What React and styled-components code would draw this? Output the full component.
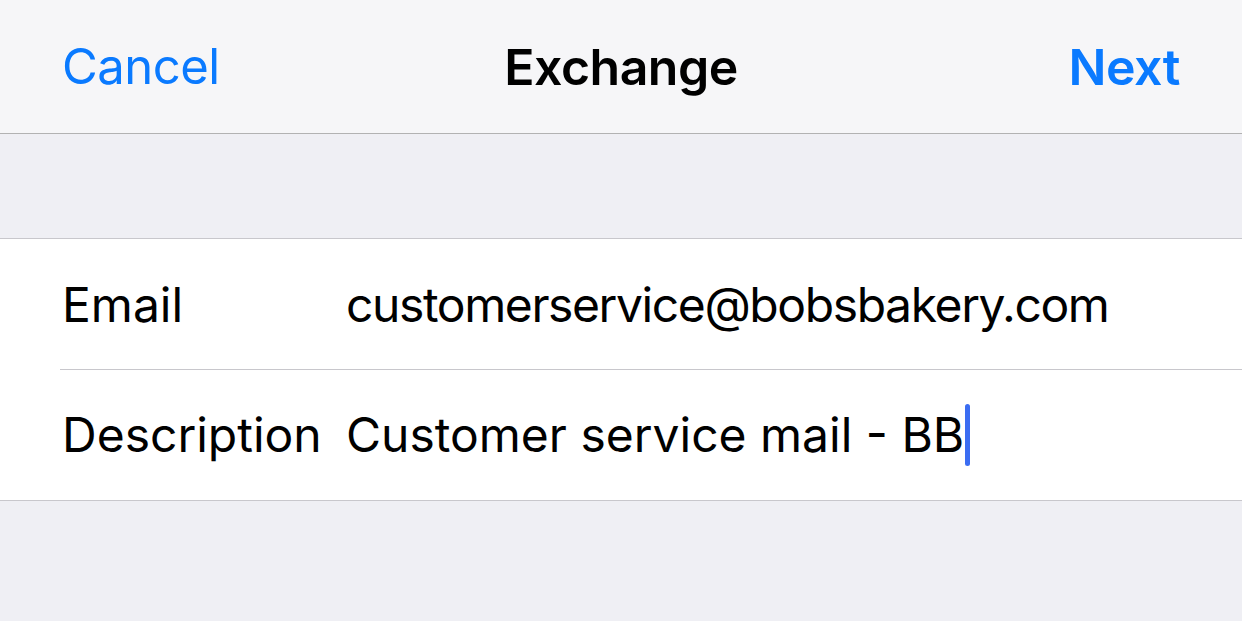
import React from "react";
import styled, { createGlobalStyle } from "styled-components";

const Global = createGlobalStyle`
  html, body {
    margin: 0;
    padding: 0;
    background: #efeff4;
    font-family: Inter, "Noto Sans", sans-serif;
    -webkit-font-smoothing: antialiased;
  }
`;

const Screen = styled.div`
  width: 1242px;
  height: 621px;
  background: #efeff4;
  overflow: hidden;
`;

const NavBar = styled.div`
  height: 133px;
  background: #f6f6f8;
  border-bottom: 1px solid #b2b2b2;
  display: grid;
  grid-template-columns: 1fr auto 1fr;
  align-items: center;
  padding: 0 62px;
  box-sizing: content-box;
`;

const NavButton = styled.button`
  background: none;
  border: 0;
  padding: 0;
  color: #0a7aff;
  font-family: inherit;
  font-size: ${(p) => (p.$bold ? "50px" : "49px")};
  font-weight: ${(p) => (p.$bold ? 600 : 400)};
  letter-spacing: -0.5px;
  justify-self: ${(p) => (p.$end ? "end" : "start")};
`;

const Title = styled.div`
  font-size: 50px;
  font-weight: 600;
  color: #000;
  letter-spacing: -0.5px;
`;

const Spacer = styled.div`
  height: 104px;
`;

const Group = styled.div`
  background: #fff;
  border-top: 1px solid #c8c7cc;
  border-bottom: 1px solid #c8c7cc;
`;

const Row = styled.div`
  height: 130px;
  display: flex;
  align-items: center;
  padding-left: 62px;
  position: relative;
  & + & {
    height: 131px;
  }
  & + &::before {
    content: "";
    position: absolute;
    top: 0;
    left: 60px;
    right: 0;
    height: 1px;
    background: #c8c7cc;
  }
`;

const Label = styled.div`
  width: 284px;
  font-size: 48px;
  color: #000;
`;

const Value = styled.div`
  font-size: 48px;
  color: #000;
  letter-spacing: ${(p) => p.$tracking || "0px"};
  display: flex;
  align-items: center;
`;

const Caret = styled.span`
  display: inline-block;
  width: 5px;
  height: 62px;
  border-radius: 3px;
  background: #3b6df2;
  margin-left: 1px;
`;

export default function App() {
  return (
    <Screen>
      <Global />
      <NavBar>
        <NavButton>Cancel</NavButton>
        <Title>Exchange</Title>
        <NavButton $bold $end>
          Next
        </NavButton>
      </NavBar>
      <Spacer />
      <Group>
        <Row>
          <Label>Email</Label>
          <Value $tracking="-1.4px">customerservice@bobsbakery.com</Value>
        </Row>
        <Row>
          <Label>Description</Label>
          <Value>
            Customer service mail - BB
            <Caret />
          </Value>
        </Row>
      </Group>
    </Screen>
  );
}
